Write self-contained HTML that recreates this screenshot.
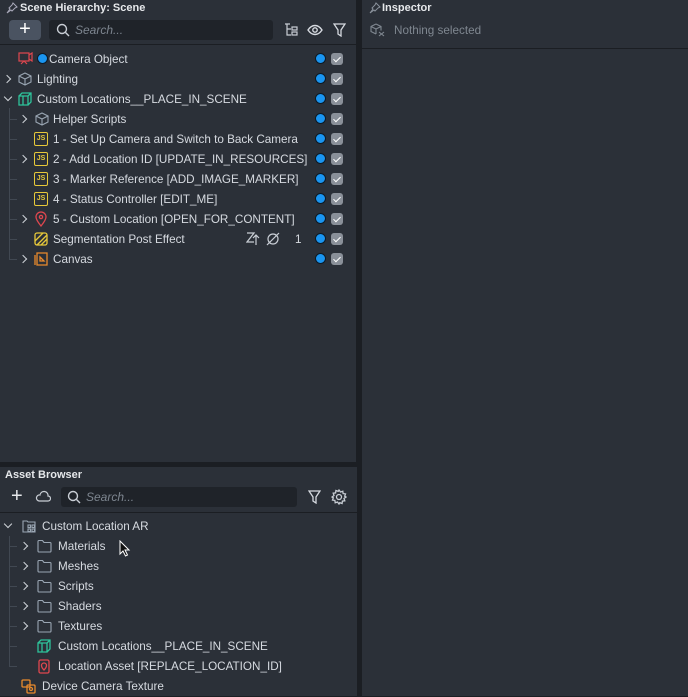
<!DOCTYPE html>
<html><head><meta charset="utf-8"><style>
*{box-sizing:border-box;margin:0;padding:0}
body{width:688px;height:696px;background:#1b1e23;font-family:"Liberation Sans",sans-serif;color:#d6dae0;font-size:11.7px;position:relative;overflow:hidden}
.p{position:absolute;background:#2b3038}
.t{position:absolute;font-weight:bold;font-size:11px;color:#e6e8eb}
.row{position:absolute;height:20px;line-height:21px;white-space:nowrap}
.dot{position:absolute;width:11px;height:11px;border-radius:50%;background:#1a95f0;border:1px solid #0d1a26}
.cb{position:absolute;width:12px;height:12px;border-radius:3px;background:#8a9099}
.cb:after{content:"";position:absolute;left:4px;top:1.5px;width:3px;height:6px;border:solid #fff;border-width:0 1.5px 1.5px 0;transform:rotate(45deg)}
.chev{position:absolute;width:6px;height:6px;border:solid #cfd3d8;border-width:0 1.5px 1.5px 0}
.js{position:absolute;width:14px;height:14px;border:1.5px solid #e8c93a;border-radius:2px;font-size:7px;line-height:11px;text-align:center;color:#e8c93a;font-weight:bold}
.fold{position:absolute}
.line{position:absolute;background:#414852}
</style></head><body>
<div class="p" style="left:0;top:0;width:357px;height:462px;border-right:1px solid #1b1e23"></div>
<div class="t" style="left:20px;top:2px">Scene Hierarchy: Scene</div>
<svg style="position:absolute;left:6px;top:2px" width="12" height="12" viewBox="0 0 12 12" fill="none" stroke="#aab" stroke-width="1"><path d="M7 1l4 4-2 1-3 3-1-1-4 3 3-4-1-1 3-3z"/></svg>
<div style="position:absolute;left:9px;top:20px;width:32px;height:20px;background:#4a5361;border-radius:4px;color:#fff;font-size:20px;line-height:19px;text-align:center">+</div>
<div style="position:absolute;left:49px;top:20px;width:224px;height:20px;background:#1f2329;border-radius:3px"></div>
<svg style="position:absolute;left:56px;top:23px" width="14" height="14" fill="none" stroke="#c9ced5" stroke-width="1.4"><circle cx="6" cy="6" r="4.5"/><path d="M9.5 9.5l3.5 3.5"/></svg>
<div style="position:absolute;left:75px;top:23px;font-style:italic;color:#7d858f;font-size:12px">Search...</div>
<svg style="position:absolute;left:284px;top:23px" width="14" height="14" fill="none" stroke="#c9ced5" stroke-width="1.2"><path d="M1 1h5M3 1v11h4M3 6h4"/><rect x="8" y="4" width="5" height="3"/><rect x="8" y="9" width="5" height="3"/></svg>
<svg style="position:absolute;left:307px;top:24px" width="16" height="12" fill="none" stroke="#d6dae0" stroke-width="1.4"><path d="M1 6c4-6 10-6 14 0c-4 6-10 6-14 0z"/><circle cx="8" cy="6" r="2.2"/></svg>
<svg style="position:absolute;left:333px;top:23px" width="13" height="14" fill="none" stroke="#d6dae0" stroke-width="1.3"><path d="M1 1h11l-4 6v6l-3-2v-4z"/></svg>
<div style="position:absolute;left:0;top:44px;width:357px;height:1px;background:#1b1e23"></div>

<div class="line" style="left:9px;top:108px;width:1px;height:152px"></div>
<div class="line" style="left:9px;top:119px;width:8px;height:1px"></div>
<div class="line" style="left:9px;top:139px;width:8px;height:1px"></div>
<div class="line" style="left:9px;top:159px;width:8px;height:1px"></div>
<div class="line" style="left:9px;top:179px;width:8px;height:1px"></div>
<div class="line" style="left:9px;top:199px;width:8px;height:1px"></div>
<div class="line" style="left:9px;top:219px;width:8px;height:1px"></div>
<div class="line" style="left:9px;top:239px;width:8px;height:1px"></div>
<div class="line" style="left:9px;top:259px;width:8px;height:1px"></div>

<svg style="position:absolute;left:18px;top:52px" width="16" height="13" fill="none" stroke="#e0474f" stroke-width="1.2"><rect x="1" y="1" width="10" height="8"/><path d="M11 3l3-2v8l-3-2M6 9l-3 3M6 9l3 3"/></svg>
<div class="dot" style="left:37px;top:53px"></div>
<div class="row" style="left:49px;top:49px">Camera Object</div>

<div class="chev" style="left:4px;top:76px;transform:rotate(-45deg)"></div>
<svg style="position:absolute;left:18px;top:72px" width="14" height="14" fill="none" stroke="#9aa6b3" stroke-width="1.1"><path d="M7 1l6 3v6l-6 3-6-3V4zM1 4l6 3 6-3M7 7v6"/></svg>
<div class="row" style="left:37px;top:69px">Lighting</div>

<div class="chev" style="left:5px;top:94px;transform:rotate(45deg)"></div>
<svg style="position:absolute;left:18px;top:92px" width="14" height="14" fill="none" stroke="#2ec39a" stroke-width="1.3"><path d="M1 4h9v9H1zM1 4l3-3h9v9l-3 3M10 4l3-3M5 4v9"/></svg>
<div class="row" style="left:37px;top:89px">Custom Locations__PLACE_IN_SCENE</div>

<div class="chev" style="left:20px;top:116px;transform:rotate(-45deg)"></div>
<svg style="position:absolute;left:35px;top:112px" width="14" height="14" fill="none" stroke="#9aa6b3" stroke-width="1.1"><path d="M7 1l6 3v6l-6 3-6-3V4zM1 4l6 3 6-3M7 7v6"/></svg>
<div class="row" style="left:53px;top:109px">Helper Scripts</div>

<div class="js" style="left:34px;top:132px">JS</div>
<div class="row" style="left:53px;top:129px">1 - Set Up Camera and Switch to Back Camera</div>
<div class="chev" style="left:20px;top:156px;transform:rotate(-45deg)"></div>
<div class="js" style="left:34px;top:152px">JS</div>
<div class="row" style="left:53px;top:149px">2 - Add Location ID [UPDATE_IN_RESOURCES]</div>
<div class="js" style="left:34px;top:172px">JS</div>
<div class="row" style="left:53px;top:169px">3 - Marker Reference [ADD_IMAGE_MARKER]</div>
<div class="js" style="left:34px;top:192px">JS</div>
<div class="row" style="left:53px;top:189px">4 - Status Controller [EDIT_ME]</div>
<div class="chev" style="left:20px;top:216px;transform:rotate(-45deg)"></div>
<svg style="position:absolute;left:35px;top:211px" width="12" height="16" fill="none" stroke="#e0474f" stroke-width="1.3"><path d="M6 15C2 10 1 8 1 6a5 5 0 0110 0c0 2-1 4-5 9z"/><circle cx="6" cy="6" r="1.6"/></svg>
<div class="row" style="left:53px;top:209px">5 - Custom Location [OPEN_FOR_CONTENT]</div>
<svg style="position:absolute;left:34px;top:232px" width="14" height="14" fill="none" stroke="#e8c93a" stroke-width="1.3"><rect x="1" y="1" width="12" height="12" rx="2"/><path d="M1 9l8-8M3 13l10-10M7 13l6-6"/></svg>
<div class="row" style="left:53px;top:229px">Segmentation Post Effect</div>
<svg style="position:absolute;left:246px;top:232px" width="14" height="14" fill="none" stroke="#c9ced5" stroke-width="1.2"><path d="M1 1h7L1 10h7M10 13V3M7 6l3-3 3 3"/></svg>
<svg style="position:absolute;left:266px;top:232px" width="14" height="14" fill="none" stroke="#c9ced5" stroke-width="1.2"><circle cx="7" cy="7" r="5"/><path d="M1 13L13 1"/></svg>
<div class="row" style="left:295px;top:229px">1</div>
<div class="chev" style="left:20px;top:256px;transform:rotate(-45deg)"></div>
<svg style="position:absolute;left:34px;top:252px" width="14" height="14" fill="none" stroke="#e98a2c" stroke-width="1.3"><path d="M3 1h10v12H3zM1 3v10M6 5v4h4z"/></svg>
<div class="row" style="left:53px;top:249px">Canvas</div>

<div class="dot" style="left:315px;top:53px"></div><div class="cb" style="left:331px;top:53px"></div>
<div class="dot" style="left:315px;top:73px"></div><div class="cb" style="left:331px;top:73px"></div>
<div class="dot" style="left:315px;top:93px"></div><div class="cb" style="left:331px;top:93px"></div>
<div class="dot" style="left:315px;top:113px"></div><div class="cb" style="left:331px;top:113px"></div>
<div class="dot" style="left:315px;top:133px"></div><div class="cb" style="left:331px;top:133px"></div>
<div class="dot" style="left:315px;top:153px"></div><div class="cb" style="left:331px;top:153px"></div>
<div class="dot" style="left:315px;top:173px"></div><div class="cb" style="left:331px;top:173px"></div>
<div class="dot" style="left:315px;top:193px"></div><div class="cb" style="left:331px;top:193px"></div>
<div class="dot" style="left:315px;top:213px"></div><div class="cb" style="left:331px;top:213px"></div>
<div class="dot" style="left:315px;top:233px"></div><div class="cb" style="left:331px;top:233px"></div>
<div class="dot" style="left:315px;top:253px"></div><div class="cb" style="left:331px;top:253px"></div>

<div class="p" style="left:0;top:467px;width:357px;height:229px"></div>
<div class="t" style="left:5px;top:469px">Asset Browser</div>
<div style="position:absolute;left:11px;top:486px;color:#e6e8eb;font-size:20px;line-height:20px">+</div>
<svg style="position:absolute;left:35px;top:490px" width="16" height="12" fill="none" stroke="#c9ced5" stroke-width="1.2"><path d="M4 11h9a2.5 2.5 0 000-5 4 4 0 00-8-1A3 3 0 004 11z"/></svg>
<div style="position:absolute;left:61px;top:487px;width:236px;height:20px;background:#1f2329;border-radius:3px"></div>
<svg style="position:absolute;left:67px;top:490px" width="14" height="14" fill="none" stroke="#c9ced5" stroke-width="1.4"><circle cx="6" cy="6" r="4.5"/><path d="M9.5 9.5l3.5 3.5"/></svg>
<div style="position:absolute;left:86px;top:490px;font-style:italic;color:#7d858f;font-size:12px">Search...</div>
<svg style="position:absolute;left:308px;top:490px" width="13" height="14" fill="none" stroke="#d6dae0" stroke-width="1.3"><path d="M1 1h11l-4 6v6l-3-2v-4z"/></svg>
<svg style="position:absolute;left:331px;top:489px" width="16" height="16" fill="none" stroke="#c9ced5" stroke-width="1.3"><circle cx="8" cy="8" r="2.5"/><path d="M8 1l1.5 2 2.3-.8.3 2.4 2.4.3-.8 2.3L15 8l-2 1.5.8 2.3-2.4.3-.3 2.4-2.3-.8L8 15l-1.5-2-2.3.8-.3-2.4-2.4-.3.8-2.3L1 8l2-1.5-.8-2.3 2.4-.3.3-2.4 2.3.8z"/></svg>
<div style="position:absolute;left:0;top:512px;width:357px;height:1px;background:#1b1e23"></div>

<div class="line" style="left:9px;top:536px;width:1px;height:131px"></div>
<div class="line" style="left:9px;top:546px;width:8px;height:1px"></div>
<div class="line" style="left:9px;top:566px;width:8px;height:1px"></div>
<div class="line" style="left:9px;top:586px;width:8px;height:1px"></div>
<div class="line" style="left:9px;top:606px;width:8px;height:1px"></div>
<div class="line" style="left:9px;top:626px;width:8px;height:1px"></div>
<div class="line" style="left:9px;top:646px;width:8px;height:1px"></div>
<div class="line" style="left:9px;top:666px;width:8px;height:1px"></div>

<div class="chev" style="left:5px;top:521px;transform:rotate(45deg)"></div>
<svg style="position:absolute;left:22px;top:519px" width="14" height="14" fill="none" stroke="#9aa6b3" stroke-width="1.1"><path d="M1 2h4l1 1h7v10H1z"/><rect x="6" y="6" width="2.5" height="2.5"/><rect x="10" y="6" width="2.5" height="2.5"/><rect x="6" y="10" width="2.5" height="2.5"/><rect x="10" y="10" width="2.5" height="2.5"/></svg>
<div class="row" style="left:42px;top:516px">Custom Location AR</div>

<div class="chev" style="left:21px;top:543px;transform:rotate(-45deg)"></div><svg class="fold" style="left:37px;top:539px" width="15" height="14" fill="none" stroke="#9aa6b3" stroke-width="1.1"><path d="M1 2.5a1 1 0 011-1h3.5l1.5 2h6a1 1 0 011 1v7.5a1 1 0 01-1 1H2a1 1 0 01-1-1z"/></svg><div class="row" style="left:58px;top:536px">Materials</div>
<div class="chev" style="left:21px;top:563px;transform:rotate(-45deg)"></div><svg class="fold" style="left:37px;top:559px" width="15" height="14" fill="none" stroke="#9aa6b3" stroke-width="1.1"><path d="M1 2.5a1 1 0 011-1h3.5l1.5 2h6a1 1 0 011 1v7.5a1 1 0 01-1 1H2a1 1 0 01-1-1z"/></svg><div class="row" style="left:58px;top:556px">Meshes</div>
<div class="chev" style="left:21px;top:583px;transform:rotate(-45deg)"></div><svg class="fold" style="left:37px;top:579px" width="15" height="14" fill="none" stroke="#9aa6b3" stroke-width="1.1"><path d="M1 2.5a1 1 0 011-1h3.5l1.5 2h6a1 1 0 011 1v7.5a1 1 0 01-1 1H2a1 1 0 01-1-1z"/></svg><div class="row" style="left:58px;top:576px">Scripts</div>
<div class="chev" style="left:21px;top:603px;transform:rotate(-45deg)"></div><svg class="fold" style="left:37px;top:599px" width="15" height="14" fill="none" stroke="#9aa6b3" stroke-width="1.1"><path d="M1 2.5a1 1 0 011-1h3.5l1.5 2h6a1 1 0 011 1v7.5a1 1 0 01-1 1H2a1 1 0 01-1-1z"/></svg><div class="row" style="left:58px;top:596px">Shaders</div>
<div class="chev" style="left:21px;top:623px;transform:rotate(-45deg)"></div><svg class="fold" style="left:37px;top:619px" width="15" height="14" fill="none" stroke="#9aa6b3" stroke-width="1.1"><path d="M1 2.5a1 1 0 011-1h3.5l1.5 2h6a1 1 0 011 1v7.5a1 1 0 01-1 1H2a1 1 0 01-1-1z"/></svg><div class="row" style="left:58px;top:616px">Textures</div>
<svg style="position:absolute;left:37px;top:639px" width="14" height="14" fill="none" stroke="#2ec39a" stroke-width="1.3"><path d="M1 4h9v9H1zM1 4l3-3h9v9l-3 3M10 4l3-3M5 4v9"/></svg>
<div class="row" style="left:58px;top:636px">Custom Locations__PLACE_IN_SCENE</div>
<svg style="position:absolute;left:38px;top:659px" width="12" height="15" fill="none" stroke="#e0474f" stroke-width="1.3"><rect x="1" y="1" width="10" height="13" rx="1.5"/><path d="M6 11C4 9 3.5 8 3.5 6.5a2.5 2.5 0 015 0c0 1.5-.5 2.5-2.5 4.5z"/></svg>
<div class="row" style="left:58px;top:656px">Location Asset [REPLACE_LOCATION_ID]</div>
<svg style="position:absolute;left:21px;top:679px" width="15" height="15" fill="none" stroke="#e98a2c" stroke-width="1.3"><rect x="1" y="1" width="8" height="7" rx="1"/><rect x="6" y="6" width="8" height="8" rx="1"/><circle cx="10" cy="10" r="1.5"/></svg>
<div class="row" style="left:42px;top:676px">Device Camera Texture</div>
<svg style="position:absolute;left:119px;top:540px" width="12" height="18"><path d="M1 1v13l3-3 2.5 5 2-1-2.5-5h4z" fill="#111" stroke="#fff" stroke-width="1"/></svg>

<div class="p" style="left:362px;top:0;width:326px;height:696px"></div>
<div style="position:absolute;left:362px;top:48px;width:326px;height:1px;background:#1b1e23"></div>
<svg style="position:absolute;left:369px;top:2px" width="12" height="12" viewBox="0 0 12 12" fill="none" stroke="#8a929c" stroke-width="1"><path d="M7 1l4 4-2 1-3 3-1-1-4 3 3-4-1-1 3-3z"/></svg>
<div class="t" style="left:382px;top:2px">Inspector</div>
<svg style="position:absolute;left:370px;top:23px" width="16" height="14" fill="none" stroke="#7f8790" stroke-width="1.1"><path d="M6 1l5 2.5v4M6 1L1 3.5v5L6 11M1 3.5L6 6l5-2.5M6 6v5M9 9l5 4M14 9l-5 4"/></svg>
<div class="row" style="left:394px;top:20px;color:#7f8790">Nothing selected</div>
</body></html>
